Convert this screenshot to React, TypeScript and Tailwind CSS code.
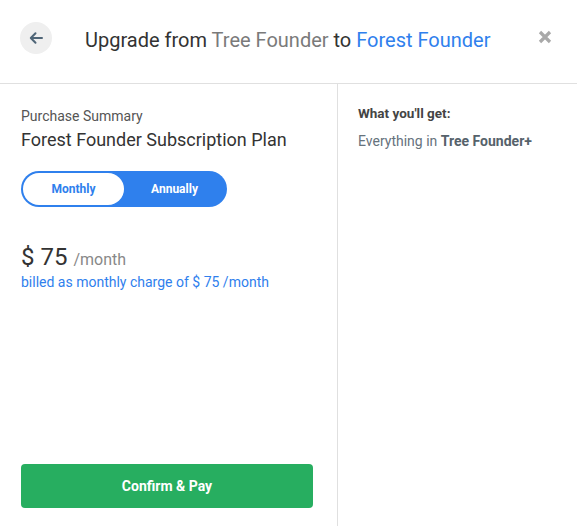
import { useState } from "react";

type Billing = "monthly" | "annually";

function BackArrow() {
	return (
		<svg width="16" height="16" viewBox="0 0 16 16" fill="none" aria-hidden="true">
			<path
				d="M14 8H3M7.5 3.2 2.8 8l4.7 4.8"
				stroke="#4f6577"
				strokeWidth="2"
				strokeLinecap="round"
				strokeLinejoin="round"
			/>
		</svg>
	);
}

function CloseIcon() {
	return (
		<svg width="14" height="14" viewBox="0 0 14 14" fill="none" aria-hidden="true">
			<path d="M2 2l10 10M12 2 2 12" stroke="#a9a9a9" strokeWidth="3.2" />
		</svg>
	);
}

export default function App() {
	const [billing, setBilling] = useState<Billing>("monthly");

	return (
		<div className="flex h-[526px] w-[577px] flex-col bg-white font-['Roboto',sans-serif] text-[#333]">
			<header className="flex h-[84px] shrink-0 items-center border-b border-[#e0e0e0] pr-[25px] pl-[20px]">
				<button
					type="button"
					className="mb-[8px] flex h-[32px] w-[32px] items-center justify-center rounded-full bg-[#efefef]"
				>
					<BackArrow />
				</button>
				<h1 className="mb-[4px] ml-[33px] flex-1 text-[20px] text-[#333]">
					Upgrade from <span className="text-[#7a7a7a]">Tree Founder</span> to{" "}
					<span className="text-[#2f80ed]">Forest Founder</span>
				</h1>
				<button type="button" className="mb-[9px]">
					<CloseIcon />
				</button>
			</header>

			<div className="flex min-h-0 flex-1">
				<section className="flex w-[338px] shrink-0 flex-col border-r border-[#e0e0e0] pt-[22px] pr-[24px] pb-[18px] pl-[21px]">
					<p className="text-[14px] leading-[20px] text-[#555]">Purchase Summary</p>
					<h2 className="mt-[1px] text-[18px] leading-[26px] text-[#333]">
						Forest Founder Subscription Plan
					</h2>

					<div className="mt-[18px] flex h-[36px] w-[206px] rounded-full bg-[#2f80ed] p-[2px]">
						<button
							type="button"
							onClick={() => setBilling("monthly")}
							className={`flex-1 rounded-full text-[12px] font-bold ${
								billing === "monthly" ? "bg-white text-[#2f80ed]" : "text-white"
							}`}
						>
							Monthly
						</button>
						<button
							type="button"
							onClick={() => setBilling("annually")}
							className={`flex-1 rounded-full text-[12px] font-bold ${
								billing === "annually" ? "bg-white text-[#2f80ed]" : "text-white"
							}`}
						>
							Annually
						</button>
					</div>

					<div className="mt-[34px] flex items-baseline leading-[32px]">
						<span className="text-[24px] text-[#333]">$ 75</span>
						<span className="ml-[6px] text-[16px] text-[#888]">/month</span>
					</div>
					<p className="-mt-[4px] text-[14px] leading-[20px] text-[#2f80ed]">
						billed as monthly charge of $ 75 /month
					</p>

					<button
						type="button"
						className="mt-auto h-[44px] w-full rounded-[4px] bg-[#27ae60] text-[14px] font-bold text-white"
					>
						Confirm &amp; Pay
					</button>
				</section>

				<section className="flex-1 px-[20px] pt-[19px]">
					<p className="text-[13.5px] leading-[20px] font-bold text-[#444]">What you'll get:</p>
					<p className="mt-[8px] text-[14px] leading-[20px] text-[#66727c]">
						Everything in <span className="font-bold text-[#56626b]">Tree Founder+</span>
					</p>
				</section>
			</div>
		</div>
	);
}
